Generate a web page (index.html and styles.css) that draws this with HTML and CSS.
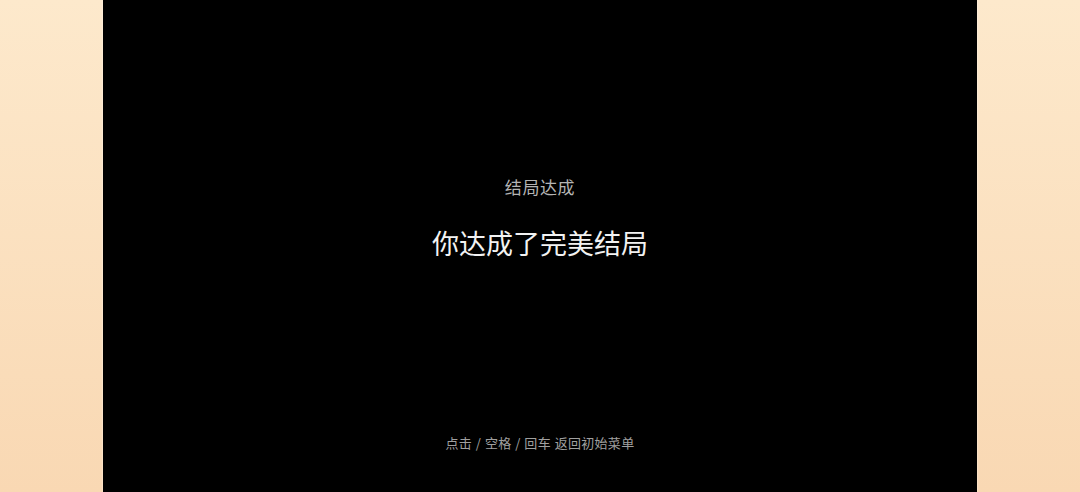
FILE: index.html
```html
<!DOCTYPE html>
<html lang="zh-CN">
<head>
<meta charset="utf-8">
<title>结局达成</title>
<link rel="stylesheet" href="styles.css">
</head>
<body>
<div class="stage">
  <main class="screen">
    <div class="ending">
      <div class="ending-label">结局达成</div>
      <div class="ending-title">你达成了完美结局</div>
    </div>
    <div class="hint">点击 / 空格 / 回车 返回初始菜单</div>
  </main>
</div>
</body>
</html>
```

FILE: styles.css
```css
html, body {
  margin: 0;
  padding: 0;
  height: 100%;
}
body {
  background: linear-gradient(180deg, #fde9cc 0%, #f9d8b3 100%);
  font-family: "Noto Sans CJK SC", "Noto Sans", sans-serif;
  overflow: hidden;
}
.stage {
  height: 100vh;
  display: flex;
  justify-content: center;
}
.screen {
  width: 874px;
  height: 492px;
  background: #000;
  box-shadow: 0 0 2px rgba(255, 250, 240, 0.9);
  display: flex;
  flex-direction: column;
  align-items: center;
  box-sizing: border-box;
  padding-top: 177px;
  padding-bottom: 41px;
}
.ending {
  flex: 1;
  display: flex;
  flex-direction: column;
  align-items: center;
}
.ending-label {
  font-size: 17px;
  line-height: 20px;
  color: #b4b4b4;
  letter-spacing: 0.6px;
}
.ending-title {
  margin-top: 30px;
  font-size: 27px;
  line-height: 32px;
  color: #f2f2f2;
}
.hint {
  font-size: 13px;
  line-height: 16px;
  color: #a0a0a0;
  letter-spacing: 0.3px;
  word-spacing: 0.5px;
}
```
